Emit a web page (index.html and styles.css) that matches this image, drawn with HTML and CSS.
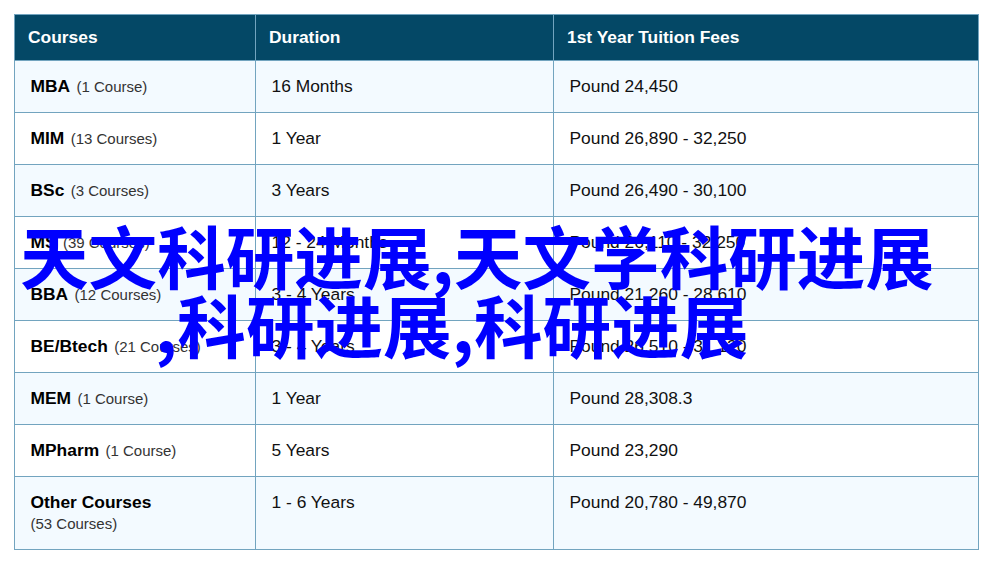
FILE: index.html
```html
<!DOCTYPE html>
<html lang="zh">
<head>
<meta charset="utf-8">
<title>天文科研进展</title>
<link rel="stylesheet" href="styles.css">
</head>
<body>
<table class="fees">
<colgroup><col class="c1"><col class="c2"><col class="c3"></colgroup>
<thead><tr><th>Courses</th><th>Duration</th><th>1st Year Tuition Fees</th></tr></thead>
<tbody>
<tr><td><b>MBA</b> <small>(1 Course)</small></td><td>16 Months</td><td>Pound 24,450</td></tr>
<tr><td><b>MIM</b> <small>(13 Courses)</small></td><td>1 Year</td><td>Pound 26,890 - 32,250</td></tr>
<tr><td><b>BSc</b> <small>(3 Courses)</small></td><td>3 Years</td><td>Pound 26,490 - 30,100</td></tr>
<tr><td><b>MS</b> <small>(39 Courses)</small></td><td>12 - 24 Months</td><td>Pound 26,110 - 32,250</td></tr>
<tr><td><b>BBA</b> <small>(12 Courses)</small></td><td>3 - 4 Years</td><td>Pound 21,260 - 28,610</td></tr>
<tr><td><b>BE/Btech</b> <small>(21 Courses)</small></td><td>3 - 4 Years</td><td>Pound 26,510 - 31,120</td></tr>
<tr><td><b>MEM</b> <small>(1 Course)</small></td><td>1 Year</td><td>Pound 28,308.3</td></tr>
<tr><td><b>MPharm</b> <small>(1 Course)</small></td><td>5 Years</td><td>Pound 23,290</td></tr>
<tr class="tall"><td><b>Other Courses</b><br><small>(53 Courses)</small></td><td>1 - 6 Years</td><td>Pound 20,780 - 49,870</td></tr>
</tbody>
</table>
<h1 class="overlay"><span class="line-a">天文科研进展,天文学科研进展</span><span class="line-b">,科研进展,科研进展</span></h1>
</body>
</html>
```
FILE: styles.css
```css
html, body { margin: 0; padding: 0; background: #fff; }
body { position: relative; height: 570px; overflow: hidden; font-family: "Liberation Sans", Arial, sans-serif; padding: 14px 14px 0; box-sizing: border-box; }
.fees { border-collapse: collapse; table-layout: fixed; width: 964px; font-size: 17.4px; color: #111; }
.c1 { width: 241px; }
.c2 { width: 298px; }
.c3 { width: 425px; }
.fees th, .fees td { border: 1px solid #72a4bf; text-align: left; padding: 0 0 0 15.5px; }
.fees th { background: #044866; color: #fff; height: 45px; font-weight: bold; padding-left: 13px; font-size: 17.4px; }
.fees td { height: 51px; }
.fees tbody tr:nth-child(odd) td { background: #f3faff; }
.fees .tall td { height: 73px; vertical-align: top; padding-top: 15px; box-sizing: border-box; }
.fees b { color: #000; margin-right: 1.5px; }
.fees small { font-size: 15px; color: #333; }
.overlay { position: absolute; left: 0; top: 220px; margin: 0; white-space: nowrap; font: bold 68.6px/69px "Noto Sans CJK SC", sans-serif; color: #0000ff; }
.line-a, .line-b { display: block; }
.line-a { margin-left: 20px; }
.line-b { margin-left: 155px; }
```
